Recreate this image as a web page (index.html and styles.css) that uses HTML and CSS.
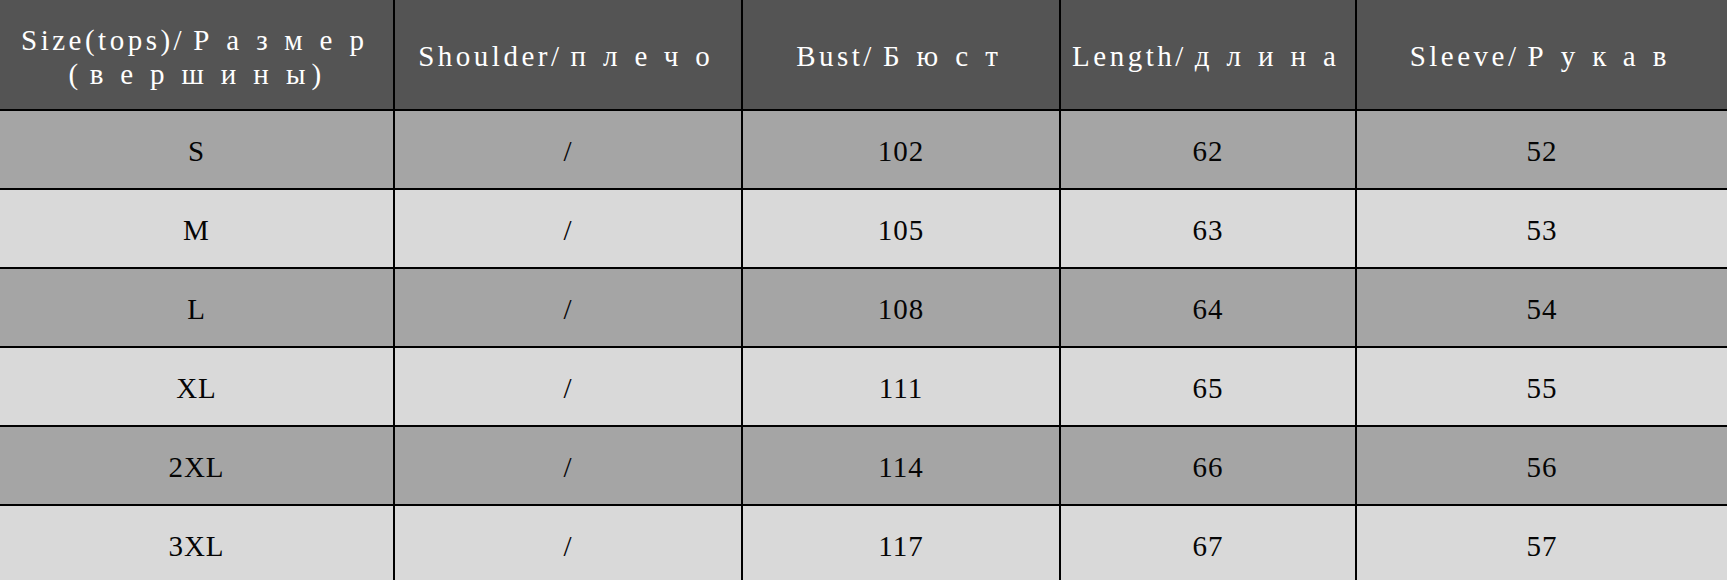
FILE: index.html
```html
<!DOCTYPE html>
<html lang="ru">
<head>
<meta charset="utf-8">
<title>Size chart</title>
<link rel="stylesheet" href="styles.css">
</head>
<body>
<div class="chart">
  <div class="row head">
    <div class="cell"><span class="two"><span>Size(tops)/<span class="cy end">Размер</span></span><span>(<span class="cy">вершин<span class="last">ы</span></span>)</span></span></div>
    <div class="cell">Shoulder/<span class="cy end">плечо</span></div>
    <div class="cell">Bust/<span class="cy end">Бюст</span></div>
    <div class="cell">Length/<span class="cy end">длина</span></div>
    <div class="cell">Sleeve/<span class="cy end">Рукав</span></div>
  </div>
  <div class="row dark">
    <div class="cell">S</div><div class="cell">/</div><div class="cell">102</div><div class="cell">62</div><div class="cell">52</div>
  </div>
  <div class="row light">
    <div class="cell">M</div><div class="cell">/</div><div class="cell">105</div><div class="cell">63</div><div class="cell">53</div>
  </div>
  <div class="row dark">
    <div class="cell">L</div><div class="cell">/</div><div class="cell">108</div><div class="cell">64</div><div class="cell">54</div>
  </div>
  <div class="row light">
    <div class="cell">XL</div><div class="cell">/</div><div class="cell">111</div><div class="cell">65</div><div class="cell">55</div>
  </div>
  <div class="row dark">
    <div class="cell">2XL</div><div class="cell">/</div><div class="cell">114</div><div class="cell">66</div><div class="cell">56</div>
  </div>
  <div class="row light">
    <div class="cell">3XL</div><div class="cell">/</div><div class="cell">117</div><div class="cell">67</div><div class="cell">57</div>
  </div>
</div>
</body>
</html>
```
FILE: styles.css
```css
html, body {
  margin: 0;
  padding: 0;
}
body {
  width: 1727px;
  height: 580px;
  overflow: hidden;
  background: #d9d9d9;
}
.chart {
  display: grid;
  grid-template-columns: 393px 346px 316px 294px 370px;
  grid-template-rows: 109px repeat(6, 77px);
  gap: 2px;
  background: #000;
  font-family: "Liberation Serif", "Times New Roman", serif;
}
.row {
  display: contents;
}
.cell {
  display: flex;
  align-items: center;
  justify-content: center;
  text-align: center;
  white-space: nowrap;
}
.head .cell {
  background: #545454;
  color: #ffffff;
  font-size: 29px;
  letter-spacing: 3.5px;
  padding-top: 4px;
}
.cy {
  letter-spacing: 17px;
  padding-left: 8px;
}
.cy.end {
  margin-right: -9px;
}
.cy .last {
  letter-spacing: 6px;
}
.two {
  display: flex;
  flex-direction: column;
  align-items: center;
  line-height: 34px;
}
.dark .cell {
  background: #a5a5a5;
}
.light .cell {
  background: #d9d9d9;
}
.dark .cell, .light .cell {
  color: #050505;
  font-size: 29px;
  letter-spacing: 1px;
  padding-top: 4px;
}
```
